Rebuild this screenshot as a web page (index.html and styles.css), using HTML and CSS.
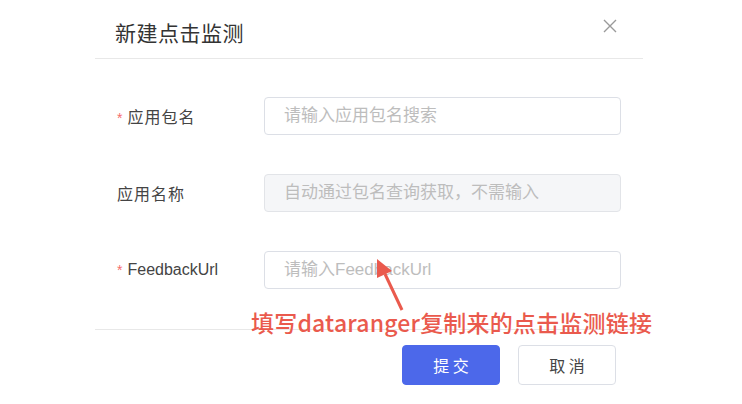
FILE: index.html
```html
<!DOCTYPE html>
<html lang="zh-CN">
<head>
  <meta charset="UTF-8">
  <meta name="viewport" content="width=device-width, initial-scale=1.0">
  <title>新建点击监测</title>
  <link rel="stylesheet" href="styles.css">
</head>
<body>
  <div class="dialog">
    <div class="dialog-header">
      <span class="dialog-title">新建点击监测</span>
      <button class="dialog-close" aria-label="关闭">
        <svg width="14" height="14" viewBox="0 0 14 14">
          <path d="M1 1 L13 13 M13 1 L1 13" stroke="#9a9a9a" stroke-width="1.4" fill="none"/>
        </svg>
      </button>
    </div>

    <div class="dialog-body">
      <div class="form-item">
        <label class="form-label"><span class="required">*</span><span class="cjk">应用包名</span></label>
        <input type="text" class="form-input" placeholder="请输入应用包名搜索">
      </div>
      <div class="form-item">
        <label class="form-label"><span class="cjk">应用名称</span></label>
        <input type="text" class="form-input" placeholder="自动通过包名查询获取，不需输入" disabled>
      </div>
      <div class="form-item">
        <label class="form-label"><span class="required">*</span>FeedbackUrl</label>
        <input type="text" class="form-input" placeholder="请输入FeedbackUrl">
      </div>
    </div>

    <div class="dialog-footer">
      <button class="btn btn-primary">提 交</button>
      <button class="btn btn-default">取 消</button>
    </div>
  </div>

  <!-- 标注 -->
  <svg class="note-arrow" width="60" height="70" viewBox="360 250 60 70">
    <line x1="402" y1="310" x2="385" y2="274" stroke="#ea5a4d" stroke-width="3"/>
    <polygon points="377,259 392,271 377,278" fill="#ea5a4d"/>
  </svg>
  <div class="note-text">填写dataranger复制来的点击监测链接</div>
</body>
</html>
```

FILE: styles.css
```css
* {
  box-sizing: border-box;
}

body {
  margin: 0;
  position: relative;
  background-color: #fff;
  color: #333;
  font-family: 'Liberation Sans', 'Noto Sans CJK SC', sans-serif;
}

/* 弹窗 */
.dialog {
  margin-left: 95px;
  width: 548px;
}

.dialog-header {
  height: 59px;
  display: flex;
  justify-content: space-between;
  align-items: flex-start;
  padding: 0 26px 0 20px;
  border-bottom: 1px solid #e8e8e8;
}

.dialog-title {
  margin-top: 20px;
  font-size: 21px;
  line-height: 24px;
  color: #333;
  letter-spacing: 0.5px;
  font-family: 'Noto Sans CJK SC', sans-serif;
}

.dialog-close {
  margin-top: 19px;
  padding: 0;
  border: none;
  background: none;
  width: 14px;
  height: 14px;
  cursor: pointer;
}

.dialog-close svg {
  display: block;
}

/* 表单 */
.dialog-body {
  padding: 38px 22px 0 22px;
}

.form-item {
  display: flex;
  align-items: center;
  margin-bottom: 39px;
}

.form-item:last-child {
  margin-bottom: 40px;
}

.form-label {
  width: 147px;
  font-size: 16px;
  color: #444;
}

.form-label .cjk {
  letter-spacing: 1px;
}

.required {
  color: #f56c6c;
  font-size: 14px;
  margin-right: 5px;
}

.form-input {
  width: 357px;
  height: 38px;
  padding: 0 19px;
  border: 1px solid #dcdfe6;
  border-radius: 4px;
  font-size: 17px;
  font-family: 'Liberation Sans', 'Noto Sans CJK SC', sans-serif;
  color: #333;
  background-color: #fff;
  outline: none;
}

.form-input::placeholder {
  color: #bdbdbd;
}

.form-input:disabled {
  background-color: #f5f6f8;
  border-color: #e2e4e8;
}

/* 底部按钮 */
.dialog-footer {
  display: flex;
  justify-content: flex-end;
  gap: 18px;
  padding: 15px 27px 0 0;
  border-top: 1px solid #e8e8e8;
}

.btn {
  width: 98px;
  height: 40px;
  border-radius: 4px;
  font-size: 16px;
  font-family: 'Noto Sans CJK SC', sans-serif;
  cursor: pointer;
}

.btn-primary {
  background-color: #4c68ea;
  border: 1px solid #4c68ea;
  color: #fff;
}

.btn-default {
  background-color: #fff;
  border: 1px solid #dcdfe6;
  color: #444;
}

/* 标注 */
.note-arrow {
  position: absolute;
  left: 360px;
  top: 250px;
}

.note-text {
  position: absolute;
  left: 251px;
  top: 307px;
  font-size: 23px;
  line-height: 30px;
  font-weight: 500;
  letter-spacing: 0.2px;
  color: #ea5a4d;
  font-family: 'Noto Sans CJK SC', sans-serif;
  white-space: nowrap;
}
```
